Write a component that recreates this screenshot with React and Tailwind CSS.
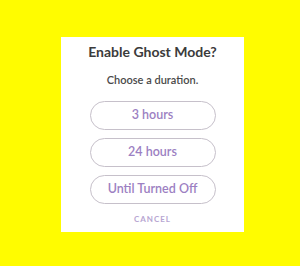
export default function App() {
  const options = ["3 hours", "24 hours", "Until Turned Off"];
  return (
    <div className="w-[300px] h-[266px] bg-[#fffc00] pt-[37px] pl-[61px] font-['Lato','Noto_Sans',sans-serif]">
      <div className="w-[183px] h-[195px] bg-white flex flex-col items-center pt-[5px]">
        <h1 className="text-[14px] leading-[20px] font-bold text-[#3b3b3b]">Enable Ghost Mode?</h1>
        <p className="mt-[10px] text-[11px] leading-[16px] font-semibold text-[#4a4a4a]">Choose a duration.</p>
        <div className="mt-[13px] flex flex-col gap-[8px]">
          {options.map((o) => (
            <button
              key={o}
              className="w-[126px] h-[29px] rounded-full border-[1.5px] border-[#c6c0ca] text-[12.5px] font-semibold text-[#9c80c2]"
            >
              {o}
            </button>
          ))}
        </div>
        <span className="mt-[9px] text-[8px] leading-[12px] font-bold tracking-[1px] text-[#b7a6d2]">CANCEL</span>
      </div>
    </div>
  );
}
